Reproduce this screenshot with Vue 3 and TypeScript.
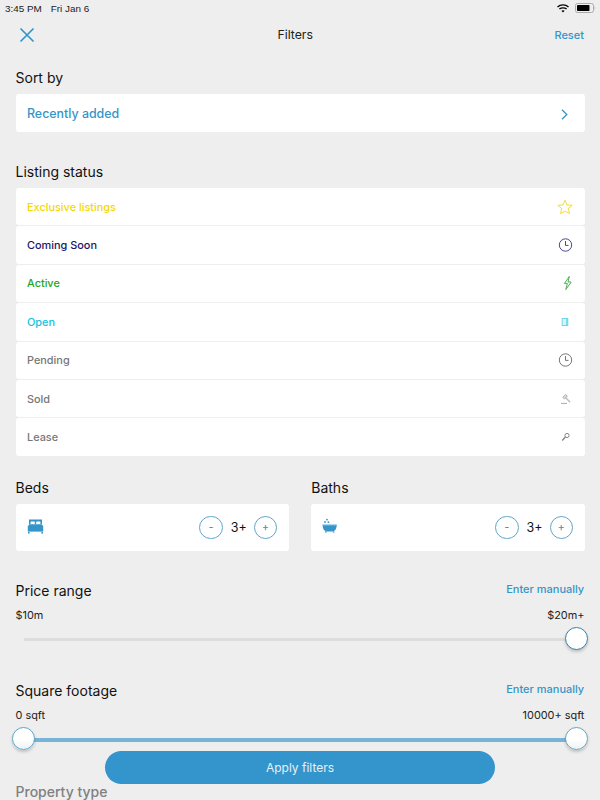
<script setup lang="ts">
interface Status {
  label: string;
  color: string;
  icon: string;
}

const statuses: Status[] = [
  { label: "Exclusive listings", color: "#f5d800", icon: "star" },
  { label: "Coming Soon", color: "#1b1464", icon: "clock" },
  { label: "Active", color: "#1fa51f", icon: "bolt" },
  { label: "Open", color: "#14c3e0", icon: "door" },
  { label: "Pending", color: "#777777", icon: "clock" },
  { label: "Sold", color: "#777777", icon: "gavel" },
  { label: "Lease", color: "#777777", icon: "key" },
];
</script>

<template>
  <div class="page">
    <div class="status-bar">
      <span class="time">3:45 PM</span>
      <span class="date">Fri Jan 6</span>
      <span class="spacer"></span>
      <svg class="wifi" width="12" height="9" viewBox="0 0 12 9">
        <path d="M0.5 3 C3.5 0.2 8.5 0.2 11.5 3" fill="none" stroke="#000" stroke-width="1.3" />
        <path d="M2.4 5 C4.3 3.4 7.7 3.4 9.6 5" fill="none" stroke="#000" stroke-width="1.3" />
        <path d="M4.4 6.8 L6 8.6 L7.6 6.8 C6.7 6 5.3 6 4.4 6.8 Z" fill="#000" />
      </svg>
      <svg class="battery" width="21" height="10" viewBox="0 0 21 10">
        <rect x="0.5" y="0.5" width="18" height="9" rx="2" fill="none" stroke="#aaa" />
        <rect x="2" y="2" width="12.5" height="6" rx="0.8" fill="#000" />
        <path d="M19.6 3.4 C20.4 3.7 20.4 6.3 19.6 6.6 Z" fill="#aaa" />
      </svg>
    </div>

    <header class="nav">
      <svg class="close" width="16" height="16" viewBox="0 0 16 16">
        <path d="M1.5 1.5 L14.5 14.5 M14.5 1.5 L1.5 14.5" stroke="#3395c9" stroke-width="1.7" fill="none" />
      </svg>
      <span class="nav-title">Filters</span>
      <span class="link reset">Reset</span>
    </header>

    <main class="content">
      <section class="sort">
        <h2>Sort by</h2>
        <div class="card sort-card">
          <span class="sort-value">Recently added</span>
          <svg class="chevron" width="8" height="11" viewBox="0 0 8 11">
            <path d="M1 0.8 L5.8 5.5 L1 10.2" stroke="#3395c9" stroke-width="1.3" fill="none" />
          </svg>
        </div>
      </section>

      <section class="listing">
        <h2>Listing status</h2>
        <ul class="status-list">
          <li v-for="s in statuses" :key="s.label" class="status-row">
            <span :style="{ color: s.color }">{{ s.label }}</span>
            <span class="status-icon">
              <svg v-if="s.icon === 'star'" width="16" height="16" viewBox="0 0 16 16">
                <path d="M8 1.2 L10 6 L15.2 6.3 L11.2 9.6 L12.6 14.7 L8 12 L3.4 14.7 L4.8 9.6 L0.8 6.3 L6 6 Z" fill="none" stroke="#f5dc3c" stroke-width="1" />
              </svg>
              <svg v-else-if="s.icon === 'clock'" width="16" height="16" viewBox="0 0 16 16">
                <circle cx="8.5" cy="8" r="6.2" fill="none" :stroke="s.color === '#777777' ? '#666' : '#3a3580'" stroke-width="0.9" />
                <path d="M8.5 4 V8.4 H11.5" fill="none" :stroke="s.color === '#777777' ? '#666' : '#3a3580'" stroke-width="0.9" />
              </svg>
              <svg v-else-if="s.icon === 'bolt'" width="16" height="16" viewBox="0 0 16 16">
                <path d="M12.3 1.4 L7.4 8.4 H10.4 L8.8 14.6 L14.2 7 H11 Z" fill="none" stroke="#4fb04f" stroke-width="1" />
              </svg>
              <svg v-else-if="s.icon === 'door'" width="16" height="16" viewBox="0 0 16 16">
                <rect x="5.2" y="4.5" width="5.6" height="7" fill="#d6f4fa" stroke="#6dd6ea" stroke-width="1" />
                <rect x="9.2" y="4.5" width="1.6" height="7" fill="#6dd6ea" />
              </svg>
              <svg v-else-if="s.icon === 'gavel'" width="16" height="16" viewBox="0 0 16 16">
                <path d="M5.8 6.4 L8.6 3.4 L10.4 5 L7.6 8 Z" fill="#ddd" stroke="#aaa" stroke-width="0.9" />
                <path d="M8.6 6.6 L13 11.2" fill="none" stroke="#bbb" stroke-width="1.4" />
                <path d="M4 12.4 H10" fill="none" stroke="#aaa" stroke-width="1" />
              </svg>
              <svg v-else width="16" height="16" viewBox="0 0 16 16">
                <circle cx="10" cy="6.5" r="2.1" fill="none" stroke="#888" stroke-width="1" />
                <path d="M8.4 8.1 L5.2 11.6" fill="none" stroke="#888" stroke-width="1.5" />
              </svg>
            </span>
          </li>
        </ul>
      </section>

      <section class="counters">
        <div class="counter">
          <h2>Beds</h2>
          <div class="card counter-card">
            <svg class="room-icon" width="17" height="17" viewBox="0 0 17 17">
              <path d="M2 1.5 H15 V6.5 H2 Z" fill="#3395c9" />
              <rect x="3.6" y="3.6" width="4.2" height="2.4" rx="0.6" fill="#fff" />
              <rect x="9.2" y="3.6" width="4.2" height="2.4" rx="0.6" fill="#fff" />
              <path d="M0.8 8 H16.2 V13.6 H0.8 Z" fill="#3395c9" />
              <path d="M0.8 8.6 L2 6.5 H15 L16.2 8.6 Z" fill="#3395c9" />
              <rect x="1" y="14" width="1.6" height="1.6" fill="#3395c9" />
              <rect x="14.4" y="14" width="1.6" height="1.6" fill="#3395c9" />
            </svg>
            <div class="stepper">
              <span class="step-btn">-</span>
              <span class="step-value">3+</span>
              <span class="step-btn">+</span>
            </div>
          </div>
        </div>
        <div class="counter">
          <h2>Baths</h2>
          <div class="card counter-card">
            <svg class="room-icon" width="17" height="17" viewBox="0 0 17 17">
              <circle cx="5" cy="1.6" r="0.9" fill="#3395c9" />
              <circle cx="3" cy="4" r="0.9" fill="#3395c9" />
              <circle cx="6.4" cy="4.2" r="0.9" fill="#3395c9" />
              <path d="M0.7 7.6 H14.6 C14.6 11 13 13.4 10.6 13.4 H4.7 C2.3 13.4 0.7 11 0.7 7.6 Z" fill="#3395c9" />
              <rect x="0.4" y="6.6" width="14.5" height="1" fill="#3395c9" />
              <rect x="3" y="13.4" width="1.6" height="1.2" fill="#3395c9" />
              <rect x="10.8" y="13.4" width="1.6" height="1.2" fill="#3395c9" />
            </svg>
            <div class="stepper">
              <span class="step-btn">-</span>
              <span class="step-value">3+</span>
              <span class="step-btn">+</span>
            </div>
          </div>
        </div>
      </section>

      <section class="range price">
        <div class="range-head">
          <h2>Price range</h2>
          <span class="link">Enter manually</span>
        </div>
        <div class="range-values">
          <span>$10m</span>
          <span>$20m+</span>
        </div>
        <div class="slider">
          <div class="track"></div>
          <span class="thumb thumb-end thumb-dark"></span>
        </div>
      </section>

      <section class="range footage">
        <div class="range-head">
          <h2>Square footage</h2>
          <span class="link">Enter manually</span>
        </div>
        <div class="range-values">
          <span>0 sqft</span>
          <span>10000+ sqft</span>
        </div>
        <div class="slider">
          <div class="track track-on"></div>
          <span class="thumb thumb-start"></span>
          <span class="thumb thumb-end"></span>
        </div>
      </section>

      <h2 class="next-section">Property type</h2>
    </main>

    <button class="apply" type="button">Apply filters</button>
  </div>
</template>

<style scoped>
.page {
  position: relative;
  width: 600px;
  height: 800px;
  overflow: hidden;
  background: #eeeeee;
  font-family: Inter, "Liberation Sans", sans-serif;
  color: #111111;
}

.status-bar {
  display: flex;
  align-items: center;
  height: 16px;
  padding: 0 4px 0 5px;
  font-family: "Liberation Sans", Arial, sans-serif;
  font-size: 9.9px;
  color: #222222;
}
.date {
  margin-left: 9px;
}
.spacer {
  flex: 1;
}
.wifi {
  margin-right: 6px;
}

.nav {
  display: flex;
  align-items: center;
  justify-content: space-between;
  height: 38px;
  padding: 0 16px 0 19px;
}
.nav-title {
  font-size: 12.3px;
  margin-left: 1px;
  margin-top: -1px;
  color: #222222;
}
.link {
  font-size: 11px;
  font-weight: 500;
  color: #3395c9;
}

.content {
  padding: 0 15px 0 15.5px;
}

h2 {
  margin: 0;
  font-size: 14px;
  line-height: 16px;
  font-weight: 400;
  color: #111111;
}

.sort {
  padding-top: 16px;
}
.card {
  background: #ffffff;
  border-radius: 3px;
}
.sort-card {
  display: flex;
  align-items: center;
  justify-content: space-between;
  height: 38px;
  margin-top: 8px;
  padding: 0 16px 0 11.5px;
}
.sort-value {
  font-size: 12.4px;
  font-weight: 500;
  color: #3395c9;
}
.chevron {
  margin-top: 3px;
}

.listing {
  padding-top: 32px;
}
.status-list {
  list-style: none;
  margin: 8px 0 0;
  padding: 0;
  display: flex;
  flex-direction: column;
  gap: 1px;
}
.status-row {
  display: flex;
  align-items: center;
  justify-content: space-between;
  height: 37.4px;
  padding: 0 12px 0 11.5px;
  background: #ffffff;
  border-radius: 3px;
  font-size: 10.9px;
  font-weight: 500;
}
.status-icon {
  display: flex;
}

.counters {
  display: flex;
  gap: 22px;
  padding-top: 24.2px;
}
.counter {
  flex: 1;
}
.counter-card {
  display: flex;
  align-items: center;
  justify-content: space-between;
  height: 47px;
  margin-top: 8px;
  padding: 0 12px 0 11px;
}
.room-icon {
  margin-top: -1px;
}
.stepper {
  display: flex;
  align-items: center;
  gap: 8px;
}
.step-btn {
  display: flex;
  align-items: center;
  justify-content: center;
  width: 23.5px;
  height: 23.5px;
  border: 1px solid #5fa6c9;
  border-radius: 50%;
  box-sizing: border-box;
  font-size: 11px;
  color: #3395c9;
}
.step-value {
  width: 15px;
  box-sizing: border-box;
  padding-right: 2px;
  font-size: 12.5px;
  white-space: nowrap;
  color: #111111;
}

.range {
  display: flex;
  flex-direction: column;
}
.price {
  padding-top: 32px;
}
.footage {
  padding-top: 32px;
}
.range-head {
  display: flex;
  justify-content: space-between;
  align-items: flex-start;
  padding-right: 0.8px;
}
.range-head .link {
  line-height: 14px;
  margin-top: -1px;
}
.range-values {
  display: flex;
  justify-content: space-between;
  margin-top: 8.6px;
  padding-right: 0.6px;
  font-size: 10.9px;
  line-height: 14px;
  color: #222222;
}
.slider {
  position: relative;
  height: 29.4px;
}
.track {
  position: absolute;
  left: 8.5px;
  right: 9px;
  top: 16.9px;
  height: 3px;
  background: #dddddd;
}
.track-on {
  left: 8px;
  right: 8px;
  top: 16.4px;
  height: 4px;
  background: #77b5d8;
}
.thumb {
  position: absolute;
  top: 5.4px;
  width: 23px;
  height: 23px;
  box-sizing: border-box;
  border: 1px solid #5fa6c9;
  border-radius: 50%;
  background: linear-gradient(#ffffff 55%, #eef2f4);
  box-shadow: 0 2px 3px rgba(0, 0, 0, 0.18);
}
.thumb-start {
  left: -4px;
}
.thumb-end {
  right: -3px;
}
.thumb-dark {
  border-color: #2b86b8;
  background: #ffffff;
}

.next-section {
  padding-top: 33px;
  color: #808080;
  font-weight: 500;
}

.apply {
  position: absolute;
  left: 105px;
  top: 751px;
  width: 390px;
  height: 33px;
  border: none;
  border-radius: 17px;
  background: #3395cb;
  color: #e4f1f8;
  font-family: Inter, "Liberation Sans", sans-serif;
  font-size: 12px;
}
</style>
